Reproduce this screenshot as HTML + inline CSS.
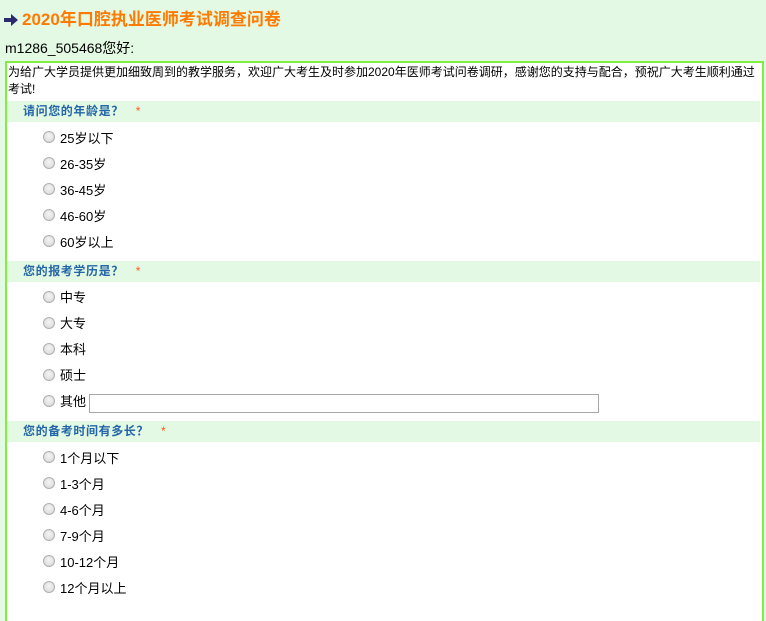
<!DOCTYPE html>
<html><head><meta charset="utf-8">
<style>
*{margin:0;padding:0;box-sizing:border-box}
body{width:766px;height:604px;overflow:hidden;background:#e3f9e3;font-family:"Liberation Sans","Noto Sans CJK SC",sans-serif;position:relative;color:#000}
.a{position:absolute;white-space:nowrap}
#title{left:22px;top:9px;font-size:17px;font-weight:bold;color:#ff7a00;line-height:22px}
#arrow{left:4px;top:14px}
#hello{left:5px;top:40px;font-size:14px;line-height:17px}
#box{position:absolute;left:5px;top:61px;width:759px;height:560px;border:2px solid #80f040;border-bottom:none;background:#fff}
#intro{left:8px;top:64px;font-size:12px;line-height:17px;white-space:normal;width:752px}
.q{position:absolute;left:7px;width:753px;height:21px;background:#e3f9e3;font-size:12px;font-weight:bold;color:#2466a8;line-height:21px;padding-left:16px;letter-spacing:0.6px}
.q span{color:#ff5a1a;margin-left:8px;font-weight:normal}
.r{position:absolute;left:43px;width:12px;height:12px;border-radius:50%;border:1px solid #b0b0b0;background:radial-gradient(circle at 50% 40%,#f4f4f4,#d6d6d6)}
.t{position:absolute;left:60px;font-size:13px;line-height:16px}
#inp{position:absolute;left:89px;top:394px;width:510px;height:19px;border:1px solid #a8a8a8;background:#fff}
</style></head><body>
<svg class="a" id="arrow" width="14" height="12" viewBox="0 0 14 12"><path d="M0 4h7V0l7 6-7 6V8H0z" fill="#2b2b6e"/></svg>
<div class="a" id="title">2020年口腔执业医师考试调查问卷</div>
<div class="a" id="hello">m1286_505468您好:</div>
<div id="box"></div>
<div class="a" id="intro">为给广大学员提供更加细致周到的教学服务，欢迎广大考生及时参加2020年医师考试问卷调研，感谢您的支持与配合，预祝广大考生顺利通过考试!</div>

<div class="q" style="top:101px">请问您的年龄是？ <span>*</span></div>
<div class="r" style="top:131px"></div><div class="t" style="top:131px">25岁以下</div>
<div class="r" style="top:157px"></div><div class="t" style="top:157px">26-35岁</div>
<div class="r" style="top:183px"></div><div class="t" style="top:183px">36-45岁</div>
<div class="r" style="top:209px"></div><div class="t" style="top:209px">46-60岁</div>
<div class="r" style="top:235px"></div><div class="t" style="top:235px">60岁以上</div>

<div class="q" style="top:261px">您的报考学历是？ <span>*</span></div>
<div class="r" style="top:291px"></div><div class="t" style="top:290px">中专</div>
<div class="r" style="top:317px"></div><div class="t" style="top:316px">大专</div>
<div class="r" style="top:343px"></div><div class="t" style="top:342px">本科</div>
<div class="r" style="top:369px"></div><div class="t" style="top:368px">硕士</div>
<div class="r" style="top:395px"></div><div class="t" style="top:394px">其他</div>
<div id="inp"></div>

<div class="q" style="top:421px">您的备考时间有多长？ <span>*</span></div>
<div class="r" style="top:451px"></div><div class="t" style="top:451px">1个月以下</div>
<div class="r" style="top:477px"></div><div class="t" style="top:477px">1-3个月</div>
<div class="r" style="top:503px"></div><div class="t" style="top:503px">4-6个月</div>
<div class="r" style="top:529px"></div><div class="t" style="top:529px">7-9个月</div>
<div class="r" style="top:555px"></div><div class="t" style="top:555px">10-12个月</div>
<div class="r" style="top:581px"></div><div class="t" style="top:581px">12个月以上</div>
</body></html>
